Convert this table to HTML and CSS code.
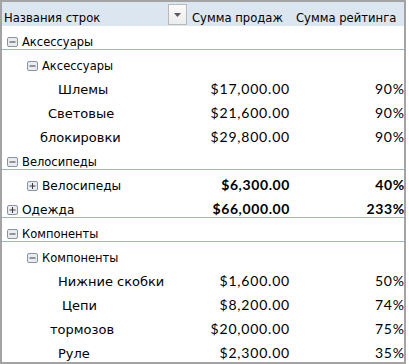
FILE: index.html
```html
<!DOCTYPE html>
<html lang="ru">
<head>
<meta charset="utf-8">
<link rel="stylesheet" href="styles.css">
</head>
<body>
<div class="pivot">
  <div class="hdr">
    <div class="h-label"><span>Названия строк</span><span class="dd"><svg width="8" height="4" viewBox="0 0 8 4"><path d="M0 0h7L3.5 4z" fill="#5a5a5a"/></svg></span></div>
    <div class="h-sales">Сумма продаж</div>
    <div class="h-rate">Сумма рейтинга</div>
  </div>

  <div class="row sep">
    <div class="lbl l1"><svg class="tg" width="11" height="10" viewBox="0 0 11 10"><rect x="0.5" y="0.5" width="10" height="9" rx="1.5" fill="#e9edf2" stroke="#8593a3"/><path d="M2.5 5h6" stroke="#3a3a3a"/></svg>Аксессуары</div>
    <div class="val"></div><div class="val rate"></div>
  </div>
  <div class="row">
    <div class="lbl l2"><svg class="tg" width="11" height="10" viewBox="0 0 11 10"><rect x="0.5" y="0.5" width="10" height="9" rx="1.5" fill="#e9edf2" stroke="#8593a3"/><path d="M2.5 5h6" stroke="#3a3a3a"/></svg>Аксессуары</div>
    <div class="val"></div><div class="val rate"></div>
  </div>
  <div class="row">
    <div class="lbl leaf"><span class="lt lt-a">Шлемы</span></div>
    <div class="val">$17,000.00</div><div class="val rate">90%</div>
  </div>
  <div class="row">
    <div class="lbl leaf"><span class="lt lt-b">Световые</span></div>
    <div class="val">$21,600.00</div><div class="val rate">90%</div>
  </div>
  <div class="row">
    <div class="lbl leaf"><span class="lt lt-c">блокировки</span></div>
    <div class="val">$29,800.00</div><div class="val rate">90%</div>
  </div>
  <div class="row sep">
    <div class="lbl l1"><svg class="tg" width="11" height="10" viewBox="0 0 11 10"><rect x="0.5" y="0.5" width="10" height="9" rx="1.5" fill="#e9edf2" stroke="#8593a3"/><path d="M2.5 5h6" stroke="#3a3a3a"/></svg>Велосипеды</div>
    <div class="val"></div><div class="val rate"></div>
  </div>
  <div class="row">
    <div class="lbl l2 big"><svg class="tg" width="11" height="10" viewBox="0 0 11 10"><rect x="0.5" y="0.5" width="10" height="9" rx="1.5" fill="#e9edf2" stroke="#8593a3"/><path d="M2.5 5h6M5.5 2v6" stroke="#3a3a3a"/></svg>Велосипеды</div>
    <div class="val bold">$6,300.00</div><div class="val rate bold">40%</div>
  </div>
  <div class="row sep">
    <div class="lbl l1 big"><svg class="tg" width="11" height="10" viewBox="0 0 11 10"><rect x="0.5" y="0.5" width="10" height="9" rx="1.5" fill="#e9edf2" stroke="#8593a3"/><path d="M2.5 5h6M5.5 2v6" stroke="#3a3a3a"/></svg>Одежда</div>
    <div class="val bold">$66,000.00</div><div class="val rate bold">233%</div>
  </div>
  <div class="row sep">
    <div class="lbl l1"><svg class="tg" width="11" height="10" viewBox="0 0 11 10"><rect x="0.5" y="0.5" width="10" height="9" rx="1.5" fill="#e9edf2" stroke="#8593a3"/><path d="M2.5 5h6" stroke="#3a3a3a"/></svg>Компоненты</div>
    <div class="val"></div><div class="val rate"></div>
  </div>
  <div class="row">
    <div class="lbl l2"><svg class="tg" width="11" height="10" viewBox="0 0 11 10"><rect x="0.5" y="0.5" width="10" height="9" rx="1.5" fill="#e9edf2" stroke="#8593a3"/><path d="M2.5 5h6" stroke="#3a3a3a"/></svg>Компоненты</div>
    <div class="val"></div><div class="val rate"></div>
  </div>
  <div class="row">
    <div class="lbl leaf"><span class="lt lt-d">Нижние скобки</span></div>
    <div class="val">$1,600.00</div><div class="val rate">50%</div>
  </div>
  <div class="row">
    <div class="lbl leaf"><span class="lt lt-e">Цепи</span></div>
    <div class="val">$8,200.00</div><div class="val rate">74%</div>
  </div>
  <div class="row">
    <div class="lbl leaf"><span class="lt lt-f">тормозов</span></div>
    <div class="val">$20,000.00</div><div class="val rate">75%</div>
  </div>
  <div class="row">
    <div class="lbl leaf"><span class="lt lt-g">Руле</span></div>
    <div class="val">$2,300.00</div><div class="val rate">35%</div>
  </div>
</div>
</body>
</html>
```
FILE: styles.css
```css
html, body {
  margin: 0;
  padding: 0;
  background: #ffffff;
}
.pivot {
  width: 406px;
  height: 364px;
  box-sizing: border-box;
  border: 2px solid #a3a3a3;
  background: #ffffff;
  color: #000000;
  font-family: "DejaVu Sans", sans-serif;
}
.hdr {
  display: grid;
  grid-template-columns: 188px 102px 112px;
  height: 24px;
  background: #dce6f1;
  font-size: 11.6px;
  align-items: end;
}
.h-label {
  display: flex;
  align-items: flex-end;
  justify-content: space-between;
  height: 24px;
  padding: 0 3px 0 2px;
}
.h-label > span:first-child {
  padding-bottom: 1px;
  line-height: 14px;
}
.dd {
  width: 19px;
  height: 21px;
  margin-bottom: 1px;
  box-sizing: border-box;
  border: 1px solid #b9b9b9;
  background: linear-gradient(#fbfbfb, #ececec);
  display: flex;
  align-items: center;
  justify-content: center;
}
.dd svg { display: block; }
.h-sales {
  padding: 0 0 1px 2px;
  line-height: 14px;
  white-space: nowrap;
}
.h-rate {
  padding: 0 0 1px 4px;
  line-height: 14px;
  white-space: nowrap;
}
.row {
  display: grid;
  grid-template-columns: 188px 102px 112px;
  height: 24px;
  box-sizing: border-box;
  align-items: end;
}
.row.sep {
  border-bottom: 1px solid #95b3d7;
}
.lbl {
  display: flex;
  align-items: center;
  font-size: 11.5px;
  line-height: 14px;
  padding-bottom: 1px;
  white-space: nowrap;
}
.row.sep .lbl { padding-bottom: 0; }
.lbl.l1 { padding-left: 5px; }
.lbl.l2 { padding-left: 25px; }
.lbl.big { font-size: 12.2px; }
.tg {
  display: block;
  flex: none;
  margin-right: 4px;
}
.lbl.leaf {
  font-size: 13px;
  line-height: 16px;
  padding-bottom: 0;
}
.lt-a { margin-left: 56px; }
.lt-b { margin-left: 46px; }
.lt-c { margin-left: 38px; }
.lt-d { margin-left: 56px; }
.lt-e { margin-left: 60px; }
.lt-f { margin-left: 48px; }
.lt-g { margin-left: 56px; }
.val {
  font-family: Lato, "Liberation Sans", sans-serif;
  font-size: 14px;
  line-height: 16px;
  letter-spacing: 0.8px;
  padding: 0 2px 1px 0;
  text-align: right;
  white-space: nowrap;
}
.row.sep .val { padding-bottom: 0; }
.val.rate { padding-right: 0; margin-right: -0.8px; }
.val.bold { font-weight: 700; letter-spacing: 0.6px; }
```
